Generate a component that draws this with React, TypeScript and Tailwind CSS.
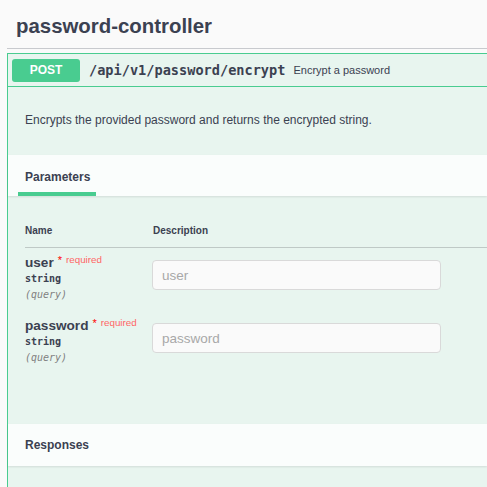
import React from "react";

const sans = "font-['Liberation_Sans',Arial,Helvetica,sans-serif]";
const mono = "font-['DejaVu_Sans_Mono','Liberation_Mono',monospace]";

function ParamRow({ name }: { name: string }) {
  return (
    <div className="flex h-[63px]">
      <div className="w-[127px] pt-[7px]">
        <div className="flex items-start h-[16px] leading-[16px] whitespace-nowrap">
          <span className="text-[13.6px] font-bold">{name}</span>
          <span className="text-[#ff0000] relative top-[-3px] ml-[4px] text-[11px]">*</span>
          <span className="text-[9.8px] text-[#f66] ml-[4px] leading-[12px] relative top-[-1px]">required</span>
        </div>
        <div className={`${mono} text-[10px] font-bold h-[16px] leading-[16px]`}>string</div>
        <div className={`${mono} text-[10px] italic text-[#808080] h-[16px] leading-[16px]`}>(query)</div>
      </div>
      <div className="pt-[12px]">
        <input
          placeholder={name}
          className="w-[289px] h-[30px] rounded-[4px] border border-[#d9d9d9] bg-[#fafafa] px-[9px] text-[13.5px] text-[#3b4151] placeholder:text-[#a8a8a8] outline-none"
        />
      </div>
    </div>
  );
}

export default function App() {
  return (
    <div className={`min-h-screen w-full overflow-hidden bg-[#fafafa] ${sans} text-[#3b4151]`}>
      <div className="pl-[7px]">
        <div className="h-[49px] border-b border-[#c8cace] pl-[9px] pt-[15px]">
          <h3 className="text-[20.4px] font-bold leading-[23px]">password-controller</h3>
        </div>
        <div className="mt-[4px] border border-r-0 border-[#49cc90] bg-[#e8f5ef]">
          <div className="h-[33px] flex items-center pl-[4px] border-b border-[#49cc90] whitespace-nowrap">
            <div className="w-[68px] h-[23px] rounded-[3px] bg-[#49cc90] text-white font-bold text-[12px] flex items-center justify-center">
              POST
            </div>
            <span className={`${mono} ml-[9px] text-[13.6px] font-bold`}>/api/v1/password/encrypt</span>
            <span className="ml-[8px] text-[11px]">Encrypt a password</span>
          </div>
          <div className="h-[68px] pt-[26px] pl-[17px]">
            <p className="text-[12px] leading-[14px]">Encrypts the provided password and returns the encrypted string.</p>
          </div>
          <div className="h-[41px] bg-[#fafdfc] shadow-[0_1px_2px_rgba(0,0,0,0.1)] pl-[10px] flex relative">
            <div className="w-[78px] h-full flex flex-col">
              <div className="flex-1 flex items-center pl-[7px] pt-[6px] text-[12px] font-bold">Parameters</div>
              <div className="h-[4px] bg-[#49cc90]"></div>
            </div>
          </div>
          <div className="h-[228px] pl-[17px]">
            <div className="flex pt-[29px] pb-[10px] border-b border-[#bfc9c6] text-[10px] font-bold leading-[12px]">
              <div className="w-[128px]">Name</div>
              <div>Description</div>
            </div>
            <ParamRow name="user" />
            <ParamRow name="password" />
          </div>
          <div className="h-[42px] bg-[#fafdfc] shadow-[0_1px_2px_rgba(0,0,0,0.1)] pl-[17px] flex items-center relative">
            <span className="text-[12px] font-bold">Responses</span>
          </div>
          <div className="h-[40px]"></div>
        </div>
      </div>
    </div>
  );
}
